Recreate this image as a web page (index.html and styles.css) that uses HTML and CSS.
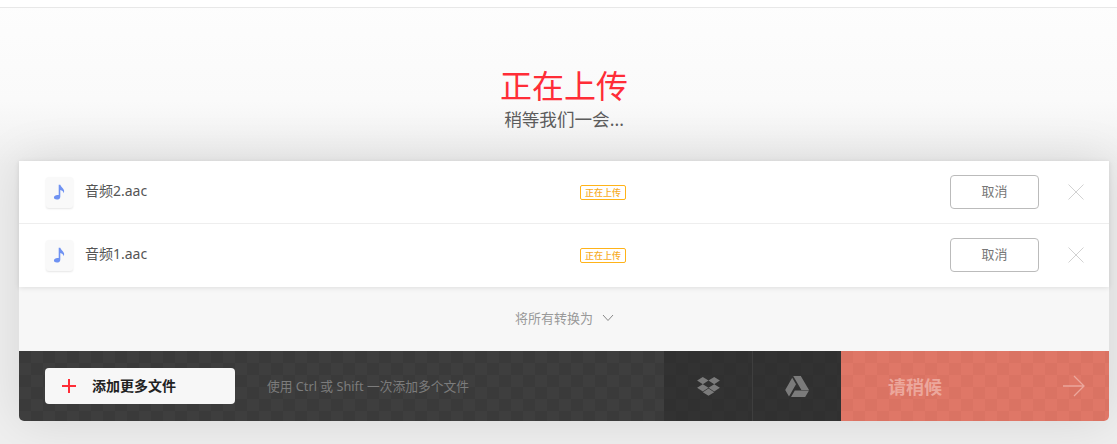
FILE: index.html
```html
<!DOCTYPE html>
<html lang="zh">
<head>
  <meta charset="UTF-8">
  <meta name="viewport" content="width=device-width, initial-scale=1.0">
  <title>正在上传</title>
  <link rel="stylesheet" href="styles.css">
</head>
<body>

<div class="topbar"></div>

<div class="heading">
  <h1>正在上传</h1>
  <p>稍等我们一会...</p>
</div>

<div class="card">
  <div class="files">
    <div class="file-row">
      <div class="file-icon">
        <svg width="13" height="16" viewBox="0 0 16 20"><path class="note" d="M7 1h2c.4 2.600 3.400 3.600 4.500 6.400.5 1.300.3 3-.5 4.100.1-2.200-1.800-3.700-4-4.100v8.400c0 2.200-2 3.700-4.400 3.700C2.500 19.500 1 18.500 1 17c0-2 2.200-3.400 4.300-3.400.6 0 1.200.1 1.700.3z"/></svg>
      </div>
      <div class="file-name">音频2.aac</div>
      <div class="file-status"><span class="badge">正在上传</span></div>
      <button class="cancel">取消</button>
      <svg class="close" width="16" height="16" viewBox="0 0 16 16"><path d="M.5.5l15 15M15.500.5l-15 15"/></svg>
    </div>
    <div class="file-row">
      <div class="file-icon">
        <svg width="13" height="16" viewBox="0 0 16 20"><path class="note" d="M7 1h2c.4 2.600 3.400 3.600 4.500 6.400.5 1.300.3 3-.5 4.100.1-2.200-1.800-3.700-4-4.100v8.400c0 2.200-2 3.700-4.400 3.700C2.500 19.500 1 18.500 1 17c0-2 2.200-3.400 4.300-3.400.6 0 1.200.1 1.700.3z"/></svg>
      </div>
      <div class="file-name">音频1.aac</div>
      <div class="file-status"><span class="badge">正在上传</span></div>
      <button class="cancel">取消</button>
      <svg class="close" width="16" height="16" viewBox="0 0 16 16"><path d="M.5.5l15 15M15.500.5l-15 15"/></svg>
    </div>
  </div>

  <div class="convert-all">
    <span>将所有转换为</span>
    <svg width="12" height="8" viewBox="0 0 12 8"><path d="M1 1l5 5.500L11 1"/></svg>
  </div>

  <div class="toolbar">
    <div class="add-area">
      <button class="add-btn">
        <svg width="14" height="14" viewBox="0 0 14 14"><path d="M7 0v14M0 7h14"/></svg>
        <span>添加更多文件</span>
      </button>
      <span class="hint">使用 Ctrl 或 Shift 一次添加多个文件</span>
    </div>
    <div class="cloud">
      <svg width="23" height="19" viewBox="0 0 24 20"><path d="M6 0l6 3.800-6 3.800-6-3.800zM18 0l6 3.800-6 3.800-6-3.800zM0 11.400l6-3.800 6 3.800-6 3.800zM18 7.600l6 3.800-6 3.800-6-3.800zM6 16l6-3.800 6 3.800-6 3.800z"/></svg>
    </div>
    <div class="cloud cloud-last">
      <svg width="24" height="21" viewBox="0 0 24 21"><path d="M8.200 0h7.600l8.200 14h-7.600zM7.200 1.700l3.800 6.500L4 20.500.2 14zM9.800 14.400H24l-3.800 6.600H6z"/></svg>
    </div>
    <div class="wait">
      <span>请稍候</span>
      <svg width="22" height="22" viewBox="0 0 22 22"><path d="M0 11h21M11 1l10 10-10 10"/></svg>
    </div>
  </div>
</div>

</body>
</html>
```

FILE: styles.css
```css
html, body {
  height: 100%;
}
body {
  font-family: "Noto Sans", "Noto Sans CJK SC", sans-serif;
  margin: 0;
  padding: 0;
  overflow: hidden;
  background: linear-gradient(#fdfdfd 0, #fafafa 100px, #efefef 165px, #efefef 100%);
}
.topbar {
  height: 7px;
  background-color: #fff;
  border-bottom: 1px solid #e8e8e8;
}
.heading {
  height: 153px;
  margin: 0 8px 0 19px;
  padding-top: 57px;
  box-sizing: border-box;
  text-align: center;
}
.heading h1 {
  margin: 0;
  font-size: 32px;
  line-height: 42px;
  font-weight: 400;
  color: #ff2d37;
}
.heading p {
  margin: 0;
  font-size: 17.600px;
  line-height: 24px;
  color: #5c5c5c;
}
.card {
  margin: 0 8px 0 19px;
  border-radius: 0 0 5px 5px;
  background-color: #f7f7f7;
  box-shadow: 0 0 50px rgba(0, 0, 0, 0.11);
}
.files {
  background-color: #fff;
  box-shadow: 0 1px 5px rgba(0, 0, 0, 0.1);
  position: relative;
}
.file-row {
  height: 63px;
  box-sizing: border-box;
  padding: 0 25px 0 27px;
  display: flex;
  align-items: center;
  border-bottom: 1px solid #eee;
}
.file-row:last-child {
  border-bottom-color: transparent;
}
.file-icon {
  width: 27px;
  height: 31px;
  margin-right: 12px;
  border-radius: 3px;
  background-color: #f9f9f9;
  box-shadow: 0 1px 2px rgba(0, 0, 0, 0.1);
  display: flex;
  align-items: center;
  justify-content: center;
}
.note {
  fill: #6f92f2;
}
.file-name {
  width: 495px;
  padding-bottom: 4px;
  font-size: 14px;
  color: #555;
}
.file-status {
  flex: 1;
  display: flex;
}
.badge {
  width: 46px;
  height: 15px;
  box-sizing: border-box;
  border: 1px solid #ffb319;
  border-radius: 2px;
  font-size: 9px;
  font-weight: 500;
  line-height: 13px;
  text-align: center;
  color: #f7ab1f;
}
.cancel {
  width: 89px;
  height: 34px;
  margin-right: 29px;
  padding: 0 0 3px;
  border: 1px solid #bbb;
  border-radius: 4px;
  background-color: #fff;
  font-family: inherit;
  font-size: 13px;
  color: #777;
}
.close path {
  stroke: #d2d2d2;
  stroke-width: 1;
  fill: none;
}
.convert-all {
  height: 64px;
  box-sizing: border-box;
  padding: 0 0 3px 1px;
  display: flex;
  align-items: center;
  justify-content: center;
  gap: 9px;
  font-size: 13px;
  color: #999;
}
.convert-all svg path {
  stroke: #888;
  fill: none;
}
.toolbar {
  height: 70px;
  display: flex;
  border-radius: 0 0 5px 5px;
  overflow: hidden;
  color: #fff;
}
.add-area {
  width: 645px;
  box-sizing: border-box;
  padding-left: 26px;
  display: flex;
  align-items: center;
  background: repeating-conic-gradient(#3e3e3e 0 25%, #3a3a3a 0 50%) 0 0 / 24px 24px;
}
.add-btn {
  width: 190px;
  height: 36px;
  padding: 0 0 2px 17px;
  margin-right: 32px;
  border: none;
  border-radius: 4px;
  background-color: #f7f7f7;
  display: flex;
  align-items: center;
  gap: 16px;
  font-family: inherit;
  font-size: 14px;
  font-weight: 700;
  color: #222;
}
.add-btn svg {
  margin-top: 2px;
}
.add-btn path {
  stroke: #ff2d37;
  stroke-width: 2;
  fill: none;
}
.hint {
  padding-bottom: 2px;
  font-size: 12.750px;
  color: #7c7c7c;
}
.cloud {
  width: 88px;
  display: flex;
  align-items: center;
  justify-content: center;
  background: repeating-conic-gradient(#323232 0 25%, #303030 0 50%) 0 0 / 24px 24px;
  border-right: 1px solid #3e3e3e;
}
.cloud-last {
  width: 88px;
  border-right: none;
}
.cloud svg {
  fill: #7b7b7b;
}
.wait {
  flex: 1;
  box-sizing: border-box;
  padding: 0 24px 0 47px;
  display: flex;
  align-items: center;
  justify-content: space-between;
  background: repeating-conic-gradient(#df7767 0 25%, #da7363 0 50%) 0 0 / 24px 24px;
  font-size: 18px;
  font-weight: 700;
  color: #eca79c;
}
.wait path {
  stroke: #eca79c;
  stroke-width: 1.300;
  fill: none;
}
```
